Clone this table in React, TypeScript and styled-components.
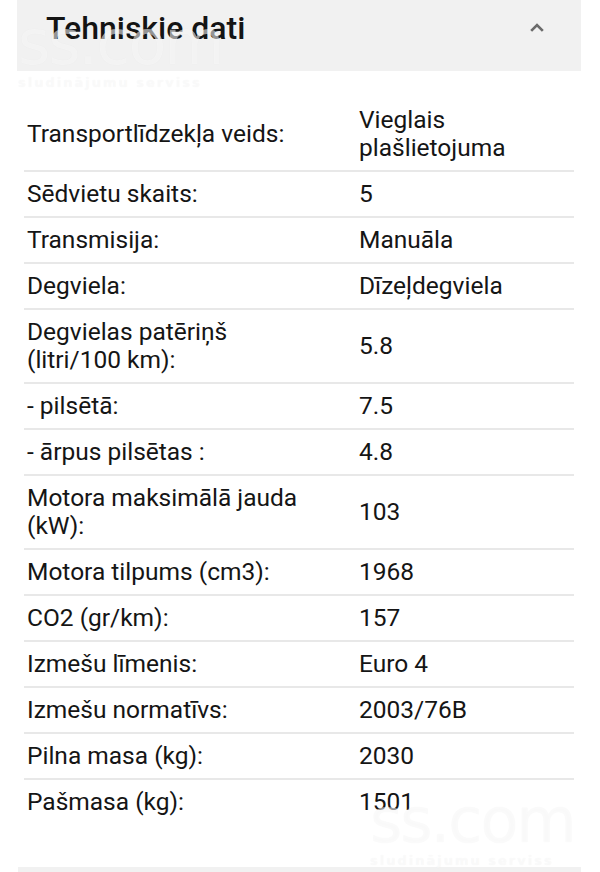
import React from "react";
import styled, { createGlobalStyle } from "styled-components";

const Global = createGlobalStyle`
  html, body { margin: 0; padding: 0; background: #ffffff; }
  body { font-family: Roboto, "Noto Sans", "Liberation Sans", sans-serif; color: #151515; }
`;

const Page = styled.div`
  position: relative;
  width: 600px;
  height: 872px;
  overflow: hidden;
  background: #ffffff;
`;

const Header = styled.div`
  margin: 0 19px 0 17px;
  height: 71px;
  background: #f1f1f1;
  display: flex;
  align-items: center;
  justify-content: space-between;
  padding: 0 34px 0 29px;
  box-sizing: border-box;
`;

const Title = styled.h2`
  margin: 0;
  font-size: 32px;
  font-weight: 500;
  color: #141414;
  padding-bottom: 16px;
`;

const Chevron = styled.svg`
  width: 20px;
  height: 20px;
  margin-bottom: 16px;
`;

const Table = styled.div`
  margin: 27px 26px 0 24px;
`;

const Row = styled.div<{ $last?: boolean }>`
  display: grid;
  grid-template-columns: 332px 1fr;
  padding: 8px 0 8px 3px;
  border-bottom: ${(p) => (p.$last ? "none" : "2px solid #e8e8e8")};
  font-size: 24.5px;
  line-height: 28px;
  align-items: center;
`;

const Label = styled.div`
  color: #151515;
  padding-right: 40px;
`;

const Value = styled.div`
  color: #151515;
`;

const Footer = styled.div`
  position: absolute;
  left: 18px;
  right: 19px;
  top: 867px;
  height: 10px;
  background: #f1f1f1;
`;

const Watermark = styled.div<{ $x: number; $y: number }>`
  position: absolute;
  left: ${(p) => p.$x}px;
  top: ${(p) => p.$y}px;
  pointer-events: none;
  color: rgba(255, 255, 255, 0.55);
  text-shadow: 0 0 1px rgba(0, 0, 0, 0.05);
  font-family: "DejaVu Sans", sans-serif;
  line-height: 1;
`;

const WmBig = styled.div`
  font-size: 62px;
  letter-spacing: -2px;
`;

const WmSmall = styled.div`
  font-size: 13px;
  letter-spacing: 2px;
  margin-top: 2px;
  font-weight: bold;
`;

const rows: [string, string][] = [
  ["Transportlīdzekļa veids:", "Vieglais plašlietojuma"],
  ["Sēdvietu skaits:", "5"],
  ["Transmisija:", "Manuāla"],
  ["Degviela:", "Dīzeļdegviela"],
  ["Degvielas patēriņš (litri/100 km):", "5.8"],
  ["- pilsētā:", "7.5"],
  ["- ārpus pilsētas :", "4.8"],
  ["Motora maksimālā jauda (kW):", "103"],
  ["Motora tilpums (cm3):", "1968"],
  ["CO2 (gr/km):", "157"],
  ["Izmešu līmenis:", "Euro 4"],
  ["Izmešu normatīvs:", "2003/76B"],
  ["Pilna masa (kg):", "2030"],
  ["Pašmasa (kg):", "1501"],
];

export default function App() {
  return (
    <Page>
      <Global />
      <Header>
        <Title>Tehniskie dati</Title>
        <Chevron viewBox="0 0 24 24">
          <path d="M5 15.5 L12 8.5 L19 15.5" fill="none" stroke="#6b6b6b" strokeWidth="3.2" />
        </Chevron>
      </Header>
      <Table>
        {rows.map(([l, v], i) => (
          <Row key={l} $last={i === rows.length - 1}>
            <Label>{l}</Label>
            <Value>{v}</Value>
          </Row>
        ))}
      </Table>
      <Footer />
      <Watermark $x={18} $y={12}>
        <WmBig>ss.com</WmBig>
        <WmSmall>sludinājumu serviss</WmSmall>
      </Watermark>
      <Watermark $x={370} $y={790}>
        <WmBig>ss.com</WmBig>
        <WmSmall>sludinājumu serviss</WmSmall>
      </Watermark>
    </Page>
  );
}
